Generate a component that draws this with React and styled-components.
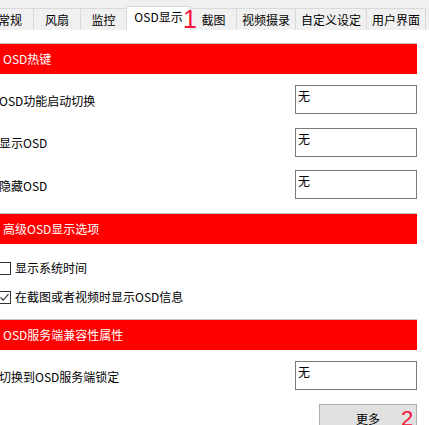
import React from "react";
import styled, { createGlobalStyle } from "styled-components";

const Global = createGlobalStyle`
  html, body { margin: 0; padding: 0; background: #ffffff; }
  body { font-family: "Noto Sans CJK SC", "Noto Sans", sans-serif; font-size: 12px; color: #000; }
`;

const Page = styled.div`
  position: relative;
  width: 429px;
  height: 425px;
  overflow: hidden;
  background: #ffffff;
`;

const TabStrip = styled.div`
  display: flex;
  align-items: flex-end;
  height: 30px;
  background: #f0f0f0;
  margin-left: -14px;
  width: 460px;
`;

const Tab = styled.div`
  box-sizing: border-box;
  flex: none;
  width: ${(p) => p.$w}px;
  height: ${(p) => (p.$active ? 24 : 22)}px;
  display: flex;
  align-items: center;
  justify-content: center;
  padding-bottom: ${(p) => (p.$active ? 3 : 0)}px;
  background: ${(p) => (p.$active ? "#ffffff" : "#f0f0f0")};
  border: 1px solid #d9d9d9;
  border-bottom: none;
  margin-right: -1px;
  font-size: 12px;
  line-height: 14px;
  white-space: nowrap;
  position: relative;
  z-index: ${(p) => (p.$active ? 1 : 0)};
`;

const Content = styled.div`
  display: flex;
  flex-direction: column;
  width: 417px;
  padding-top: 13px;
`;

const SectionBar = styled.div`
  box-sizing: border-box;
  height: 31px;
  border-top: 1px solid #c4c4c4;
  background: #ff0000;
  color: #ffffff;
  display: flex;
  align-items: center;
  padding-left: 3px;
  font-size: 12px;
  line-height: 14px;
`;

const Fields = styled.div`
  display: flex;
  flex-direction: column;
  gap: ${(p) => p.$gap}px;
  padding: ${(p) => p.$pad};
`;

const FieldRow = styled.div`
  display: flex;
  align-items: center;
  justify-content: space-between;
`;

const Label = styled.span`
  margin-left: -1px;
  font-size: 12px;
  line-height: 14px;
  padding-top: 2px;
`;

const TextBox = styled.div`
  box-sizing: border-box;
  width: 122px;
  height: 29px;
  border: 1px solid #7a7a7a;
  background: #ffffff;
  padding: 3px 2px;
  font-size: 12px;
  line-height: 14px;
`;

const CheckRow = styled.label`
  display: flex;
  align-items: center;
  gap: 4px;
  height: 20px;
  margin-left: -2px;
  font-size: 12px;
  line-height: 14px;
`;

const Box = styled.span`
  box-sizing: border-box;
  width: 13px;
  height: 13px;
  border: 1px solid #333333;
  background: #ffffff;
  display: flex;
  align-items: center;
  justify-content: center;
`;

const ButtonRow = styled.div`
  display: flex;
  justify-content: flex-end;
  padding-top: 14px;
`;

const Button = styled.div`
  box-sizing: border-box;
  width: 98px;
  height: 28px;
  background: #e1e1e1;
  border: 1px solid #adadad;
  display: flex;
  align-items: center;
  justify-content: center;
  font-size: 12px;
  line-height: 14px;
  padding-top: 2px;
`;

const Mark = styled.span`
  position: absolute;
  z-index: 5;
  left: ${(p) => p.$x}px;
  top: ${(p) => p.$y}px;
  color: #f5143c;
  font-family: "Liberation Sans", sans-serif;
  font-weight: normal;
  font-size: ${(p) => p.$size}px;
  line-height: 1;
`;

const tabs = [
  ["常规", 48],
  ["风扇", 48],
  ["监控", 47],
  ["OSD显示", 65, true],
  ["截图", 47],
  ["视频摄录", 60],
  ["自定义设定", 72],
  ["用户界面", 60],
];

function Check({ checked, children }) {
  return (
    <CheckRow>
      <Box>
        {checked && (
          <svg width="11" height="11" viewBox="0 0 11 11">
            <path d="M1.5 5.5 L4.2 8.2 L9.5 2.2" fill="none" stroke="#333" strokeWidth="1.1" />
          </svg>
        )}
      </Box>
      {children}
    </CheckRow>
  );
}

export default function App() {
  return (
    <>
      <Global />
      <Page>
        <TabStrip>
          {tabs.map(([t, w, a]) => (
            <Tab key={t} $w={w} $active={a}>
              {t}
            </Tab>
          ))}
        </TabStrip>
        <Content>
          <SectionBar>OSD热键</SectionBar>
          <Fields $gap={13.5} $pad="11px 0 14px">
            <FieldRow>
              <Label>OSD功能启动切换</Label>
              <TextBox>无</TextBox>
            </FieldRow>
            <FieldRow>
              <Label>显示OSD</Label>
              <TextBox>无</TextBox>
            </FieldRow>
            <FieldRow>
              <Label>隐藏OSD</Label>
              <TextBox>无</TextBox>
            </FieldRow>
          </Fields>
          <SectionBar>高级OSD显示选项</SectionBar>
          <Fields $gap={9} $pad="14px 0 12px">
            <Check>显示系统时间</Check>
            <Check checked>在截图或者视频时显示OSD信息</Check>
          </Fields>
          <SectionBar>OSD服务端兼容性属性</SectionBar>
          <Fields $gap={0} $pad="11px 0 0">
            <FieldRow>
              <Label>切换到OSD服务端锁定</Label>
              <TextBox>无</TextBox>
            </FieldRow>
          </Fields>
          <ButtonRow>
            <Button>更多</Button>
          </ButtonRow>
        </Content>
        <Mark $x={183} $y={7} $size={25}>1</Mark>
        <Mark $x={401} $y={408} $size={22}>2</Mark>
      </Page>
    </>
  );
}
